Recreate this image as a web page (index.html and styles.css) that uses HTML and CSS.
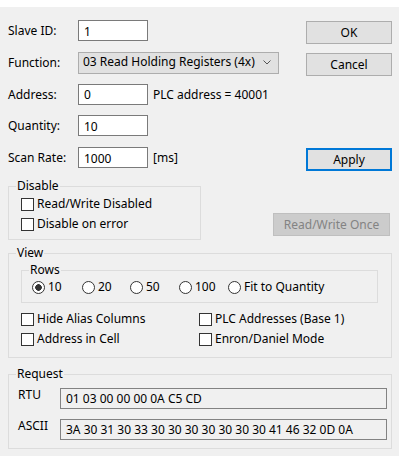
FILE: index.html
```html
<!DOCTYPE html>
<html lang="en">
<head>
  <meta charset="UTF-8" />
  <title>Read/Write Definition</title>
  <link rel="stylesheet" href="styles.css">
</head>
<body>
  <div class="titlebar"></div>

  <div class="dialog">
    <!-- ===== TOP: fields + buttons ===== -->
    <div class="top">
      <div class="fields">
        <div class="row">
          <label class="lbl">Slave ID:</label>
          <input class="edit" type="text" value="1">
        </div>
        <div class="row">
          <label class="lbl">Function:</label>
          <div class="combo">
            <span>03 Read Holding Registers (4x)</span>
            <svg width="8" height="5" viewBox="0 0 8 5"><polyline points="0.5,0.5 4,4 7.5,0.5" fill="none" stroke="#555" stroke-width="1"/></svg>
          </div>
        </div>
        <div class="row">
          <label class="lbl">Address:</label>
          <input class="edit" type="text" value="0">
          <span class="note">PLC address = 40001</span>
        </div>
        <div class="row">
          <label class="lbl">Quantity:</label>
          <input class="edit" type="text" value="10">
        </div>
        <div class="row">
          <label class="lbl">Scan Rate:</label>
          <input class="edit" type="text" value="1000">
          <span class="note">[ms]</span>
        </div>
      </div>

      <div class="buttons">
        <button class="btn">OK</button>
        <button class="btn">Cancel</button>
        <button class="btn btn-default">Apply</button>
      </div>
    </div>

    <!-- ===== DISABLE ===== -->
    <div class="middle">
      <fieldset class="group group-disable">
        <legend>Disable</legend>
        <label class="check"><input type="checkbox">Read/Write Disabled</label>
        <label class="check"><input type="checkbox">Disable on error</label>
      </fieldset>
      <button class="btn btn-once" disabled>Read/Write Once</button>
    </div>

    <!-- ===== VIEW ===== -->
    <fieldset class="group group-view">
      <legend>View</legend>
      <fieldset class="group group-rows">
        <legend>Rows</legend>
        <div class="radios">
          <label class="check"><input type="radio" name="rows" checked>10</label>
          <label class="check"><input type="radio" name="rows">20</label>
          <label class="check"><input type="radio" name="rows">50</label>
          <label class="check"><input type="radio" name="rows">100</label>
          <label class="check"><input type="radio" name="rows">Fit to Quantity</label>
        </div>
      </fieldset>
      <div class="options">
        <label class="check"><input type="checkbox">Hide Alias Columns</label>
        <label class="check"><input type="checkbox">PLC Addresses (Base 1)</label>
        <label class="check"><input type="checkbox">Address in Cell</label>
        <label class="check"><input type="checkbox">Enron/Daniel Mode</label>
      </div>
    </fieldset>

    <!-- ===== REQUEST ===== -->
    <fieldset class="group group-request">
      <legend>Request</legend>
      <div class="req-row">
        <span class="req-lbl">RTU</span>
        <div class="readonly">01 03 00 00 00 0A C5 CD</div>
      </div>
      <div class="req-row">
        <span class="req-lbl">ASCII</span>
        <div class="readonly">3A 30 31 30 33 30 30 30 30 30 30 30 41 46 32 0D 0A</div>
      </div>
    </fieldset>
  </div>
</body>
</html>
```

FILE: styles.css
```css
:root {
  --bg: #f0f0f0;
  --fg: #000000;
  --frame: #dcdcdc;
  --edge: #7a7a7a;
  --btn: #e1e1e1;
  --btn-border: #adadad;
}
* { box-sizing: border-box; margin: 0; padding: 0; }

body {
  font-family: "Noto Sans", Arial, sans-serif;
  font-size: 12px;
  line-height: 16px;
  color: var(--fg);
  background: var(--bg);
  width: 399px;
  height: 456px;
  overflow: hidden;
}

.titlebar { height: 7px; background: #ffffff; }

.dialog { padding: 0 7px 0 8px; }

/* ===== TOP ===== */
.top {
  display: flex;
  justify-content: space-between;
  padding-top: 13px;
}
.fields {
  display: flex;
  flex-direction: column;
  gap: 10.75px;
}
.row { display: flex; align-items: flex-start; height: 21px; }
.lbl { width: 70px; padding-top: 3px; }
.note { margin-left: 5px; padding-top: 3px; }

.edit {
  width: 70px;
  height: 21px;
  padding: 1px 5px 0;
  border: 1px solid var(--edge);
  background: #ffffff;
  font: inherit;
  color: var(--fg);
  outline: none;
}
.combo {
  width: 201px;
  height: 22px;
  display: flex;
  align-items: center;
  justify-content: space-between;
  padding: 0 7px 1px 4px;
  border: 1px solid var(--btn-border);
  background: var(--btn);
}
.combo svg { margin-top: 1px; }

.buttons {
  display: flex;
  flex-direction: column;
  width: 86px;
  padding-top: 1px;
}
.btn {
  height: 23px;
  font: inherit;
  color: var(--fg);
  background: var(--btn);
  border: 1px solid var(--btn-border);
}
.buttons .btn + .btn { margin-top: 9px; }
.buttons .btn-default { margin-top: 72px !important; border: 2px solid #0078d7; }

/* ===== GROUP BOXES ===== */
.group {
  border: 1px solid var(--frame);
  padding: 0 4px 0 7px;
  min-width: 0;
}
.group legend { padding: 0 1px; line-height: 16px; }

.check { display: flex; align-items: center; height: 20px; white-space: nowrap; }
.check input {
  appearance: none;
  width: 13px;
  height: 13px;
  margin: 0 3px 0 0;
  border: 1px solid #333333;
  background: #ffffff;
  flex-shrink: 0;
}
.check input[type="radio"] { border-radius: 50%; }
.check input[type="radio"]:checked {
  background: radial-gradient(circle, #333333 0 3px, #ffffff 3.6px);
}

.middle {
  display: flex;
  align-items: flex-start;
  justify-content: space-between;
  margin-top: 7px;
}
.group-disable { width: 193px; padding-left: 7px; padding-bottom: 5px; }
.group-disable .check { margin-left: 5px; }

.btn-once {
  width: 117px;
  margin-top: 35px;
  margin-right: 2px;
  background: #cccccc;
  border-color: #bfbfbf;
  color: #838383;
}

.group-view { margin-top: 5px; padding-bottom: 8px; }
.group-rows {
  width: 357px;
  margin: 1px 0 0 5px;
  padding: 0 0 5px 7px;
}
.radios {
  display: grid;
  grid-template-columns: 50px 48px 49px 49px auto;
  margin: -1px 0 0 3px;
}
.options {
  display: grid;
  grid-template-columns: 178px auto;
  margin: 6px 0 0 5px;
}

.group-request { margin-top: 8px; padding: 0 4px 8px 7px; }
.req-row { display: flex; align-items: flex-start; margin-top: 6px; }
.req-row + .req-row { margin-top: 10px; }
.req-lbl { width: 42px; margin: -1px 0 0 2px; }
.readonly {
  flex: 1;
  height: 21px;
  padding: 2px 5px 0;
  border: 1px solid #828282;
  background: var(--bg);
  white-space: nowrap;
}
```
